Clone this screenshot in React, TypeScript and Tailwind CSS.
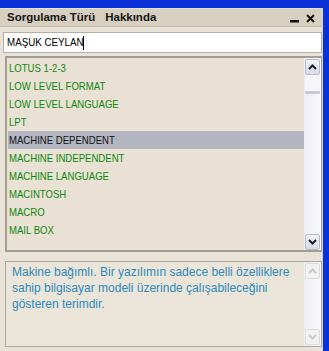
import React from "react";

const items = [
  "LOTUS 1-2-3",
  "LOW LEVEL FORMAT",
  "LOW LEVEL LANGUAGE",
  "LPT",
  "MACHINE DEPENDENT",
  "MACHINE INDEPENDENT",
  "MACHINE LANGUAGE",
  "MACINTOSH",
  "MACRO",
  "MAIL BOX",
];

function Chevron({ up, color = "#1f1f2a" }: { up: boolean; color?: string }) {
  return (
    <svg width="9" height="6" viewBox="0 0 9 6">
      {up ? (
        <polyline points="1,5 4.5,1.5 8,5" fill="none" stroke={color} strokeWidth="2" />
      ) : (
        <polyline points="1,1 4.5,4.5 8,1" fill="none" stroke={color} strokeWidth="2" />
      )}
    </svg>
  );
}

export default function App() {
  return (
    <div
      className="w-[329px] h-[351px] flex flex-col bg-[#0a30d8] overflow-hidden"
      style={{ fontFamily: '"Liberation Sans", Arial, sans-serif' }}
    >
      <div className="h-[8px] shrink-0" />
      <div className="flex-1 flex">
        <div className="w-[323px] flex flex-col bg-[#e9e3d7] border-r border-[#d8d4e8]">
          {/* header */}
          <div className="h-[19px] bg-[#d7cfbf] flex items-center pl-[7px] pr-[7px] border-t border-[#e6e0d2] border-b border-b-[#c4bcac]">
            <span className="text-[11.5px] font-bold text-[#151515]">Sorgulama Türü</span>
            <span className="text-[11.5px] font-bold text-[#151515] ml-[10px]">Hakkında</span>
            <div className="flex-1" />
            <svg width="9" height="9" viewBox="0 0 9 9" className="mr-[7px] mt-[3px]">
              <rect x="0" y="5" width="9" height="2.5" fill="#111" />
            </svg>
            <svg width="9" height="9" viewBox="0 0 9 9" className="mt-[1px]">
              <path d="M1 1 L8 8 M8 1 L1 8" stroke="#111" strokeWidth="2" />
            </svg>
          </div>
          {/* input */}
          <div className="mt-[5px] ml-[3px] w-[319px] h-[21px] bg-white border border-[#b4b0a8] flex items-center pl-[3px]">
            <span className="inline-block text-[11.5px] text-black origin-left scale-x-[0.85] whitespace-nowrap">MAŞUK CEYLAN</span>
            <span className="w-px h-[14px] bg-black ml-[-14px]" />
          </div>
          {/* list */}
          <div className="mt-[3px] ml-[5px] w-[317px] h-[196px] bg-[#e9e1d4] border-t-2 border-l-2 border-b-2 border-r border-[#a29e96] flex">
            <div className="flex-1 pt-[1px] pl-[1px]">
              {items.map((it) => {
                const sel = it === "MACHINE DEPENDENT";
                return (
                  <div
                    key={it}
                    className={
                      "h-[18px] flex items-center pl-[1px] " +
                      (sel ? "bg-[#b3b5c0] text-[#111111]" : "text-[#0e880e]")
                    }
                  >
                    <span className="inline-block text-[11px] origin-left scale-x-[0.87] whitespace-nowrap">{it}</span>
                  </div>
                );
              })}
            </div>
            <div className="w-[17px] flex flex-col bg-gradient-to-r from-[#eeeef6] to-[#f8f8fc] pt-[1px]">
              <div className="h-[16px] mx-[1px] rounded-[2px] border border-[#b9bccb] bg-gradient-to-b from-[#f2f3f8] to-[#d8dbe6] flex items-center justify-center">
                <Chevron up={true} />
              </div>
              <div className="h-[17px] mt-[2px] mx-[1px] bg-[#f6f6fa] border-b-[3px] border-[#c8c8d2] rounded-[1px]" />
              <div className="flex-1" />
              <div className="h-[16px] mx-[1px] rounded-[2px] border border-[#b9bccb] bg-gradient-to-b from-[#f2f3f8] to-[#d8dbe6] flex items-center justify-center">
                <Chevron up={false} />
              </div>
            </div>
          </div>
          {/* description */}
          <div className="mt-[9px] ml-[5px] w-[317px] h-[86px] bg-[#ebe4d8] border border-[#aca89e] flex">
            <div className="flex-1 pl-[6px] pt-[2px] text-[12px] leading-[16px] text-[#2c8bbd]">
              Makine bağımlı. Bir yazılımın sadece belli özelliklere sahip bilgisayar modeli üzerinde çalışabileceğini gösteren terimdir.
            </div>
            <div className="w-[17px] flex flex-col bg-gradient-to-r from-[#eeeef4] to-[#fafafc] py-[1px]">
              <div className="h-[16px] mx-[1px] rounded-[2px] border border-[#dcdcdc] bg-[#f2f2f2] flex items-center justify-center">
                <Chevron up={true} color="#c8c8cc" />
              </div>
              <div className="flex-1" />
              <div className="h-[16px] mx-[1px] rounded-[2px] border border-[#dcdcdc] bg-[#f2f2f2] flex items-center justify-center">
                <Chevron up={false} color="#c8c8cc" />
              </div>
            </div>
          </div>
        </div>
        <div className="flex-1" />
      </div>
    </div>
  );
}
